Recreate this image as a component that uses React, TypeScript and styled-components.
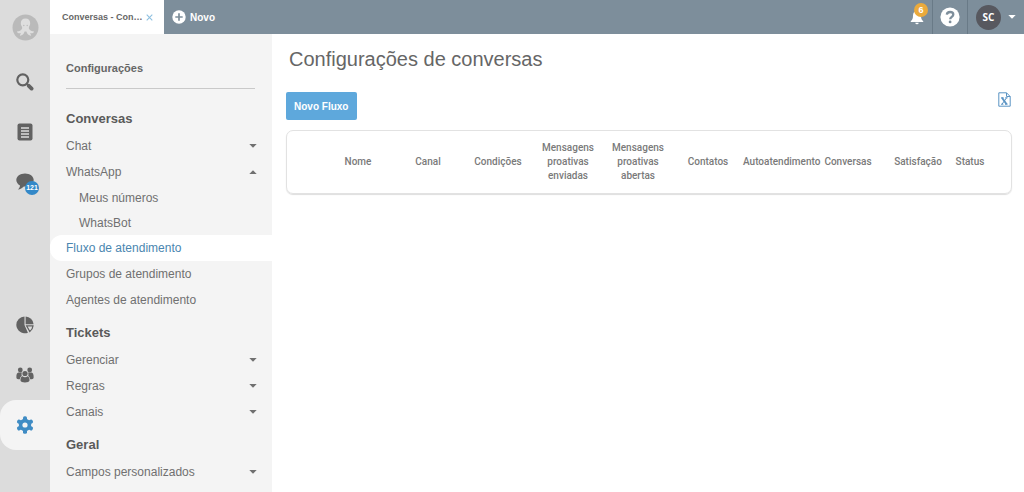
import React from "react";
import styled, { createGlobalStyle } from "styled-components";

const GlobalStyle = createGlobalStyle`
  *, *::before, *::after { box-sizing: border-box; }
  body {
    margin: 0;
    background: #fff;
    color: #666;
    font-family: "Liberation Sans", Arial, sans-serif;
    font-size: 12px;
  }
  button { font: inherit; color: inherit; border: 0; background: none; padding: 0; cursor: pointer; }
  a { color: inherit; text-decoration: none; }
  svg { display: block; }
  h1, h2, h3, ul { margin: 0; padding: 0; }
  ul { list-style: none; }
`;

const Shell = styled.div`
  display: flex;
  height: 100vh;
  overflow: hidden;
`;

const Rail = styled.nav`
  flex: 0 0 50px;
  display: flex;
  flex-direction: column;
  background: #dcdcdc;
  color: #626262;
`;

const RailLogo = styled.a`
  display: flex;
  justify-content: center;
  padding-top: 14px;
  height: 57px;
`;

const RailLink = styled.a<{ $active?: boolean }>`
  display: flex;
  flex: 0 0 50px;
  align-items: center;
  justify-content: center;
  border-radius: 16px 0 0 16px;
  background: ${(p) => (p.$active ? "#f4f4f4" : "transparent")};
  color: ${(p) => (p.$active ? "#3f8cc4" : "inherit")};
`;

const RailGap = styled.div`
  flex: 0 0 93px;
`;

const BadgeHolder = styled.span`
  position: relative;
  display: block;
`;

const Badge = styled.span<{ $tone: "blue" | "amber" }>`
  position: absolute;
  top: ${(p) => (p.$tone === "blue" ? "8px" : "-7px")};
  right: ${(p) => (p.$tone === "blue" ? "-5px" : "-4px")};
  width: 14px;
  height: 14px;
  line-height: 14px;
  border-radius: 50%;
  background: ${(p) => (p.$tone === "blue" ? "#3388c8" : "#eaaa3c")};
  color: #fff;
  font-size: ${(p) => (p.$tone === "blue" ? "7px" : "9px")};
  font-weight: 700;
  text-align: center;
`;

const Workspace = styled.div`
  flex: 1;
  min-width: 0;
  display: flex;
  flex-direction: column;
`;

const TopBar = styled.header`
  flex: 0 0 34px;
  display: flex;
  background: #7d8e9b;
  color: #fff;
`;

const Tab = styled.div`
  display: flex;
  align-items: center;
  gap: 3px;
  width: 114px;
  padding-left: 12px;
  background: #fff;
  color: #666;
  font-size: 9px;
  font-weight: 700;
`;

const CloseButton = styled.button`
  color: #8fc0e0;
`;

const NewTabButton = styled.button`
  display: flex;
  align-items: center;
  gap: 4px;
  padding: 0 8px;
  font-size: 10px;
  font-weight: 700;
`;

const TopActions = styled.div`
  display: flex;
  margin-left: auto;
`;

const TopAction = styled.button<{ $end?: boolean }>`
  display: flex;
  align-items: center;
  justify-content: ${(p) => (p.$end ? "flex-end" : "center")};
  width: 35px;
  padding-right: ${(p) => (p.$end ? "8px" : "0")};
  border-right: 1px solid #697a87;
`;

const UserButton = styled.button`
  display: flex;
  align-items: center;
  gap: 7px;
  padding: 0 8px;
`;

const Avatar = styled.span`
  flex: 0 0 25px;
  height: 25px;
  border-radius: 50%;
  background: #57585f;
  font: 700 10px/25px "Open Sans", sans-serif;
  text-align: center;
`;

const Body = styled.div`
  flex: 1;
  min-height: 0;
  display: flex;
`;

const Sidebar = styled.aside`
  flex: 0 0 222px;
  overflow: hidden;
  background: #f4f4f4;
`;

const SidebarTitle = styled.h2`
  height: 55px;
  margin: 0 17px 10px 16px;
  padding-top: 26px;
  border-bottom: 1px solid #c9c9c9;
  font-size: 11px;
  line-height: 16px;
`;

const Section = styled.section`
  padding-top: 10px;
`;

const SectionTitle = styled.h3`
  height: 24px;
  padding-left: 16px;
  font-size: 13px;
  line-height: 20px;
  color: #5a5a5a;
`;

const MenuLink = styled.a<{ $active?: boolean; $sub?: boolean }>`
  display: flex;
  align-items: center;
  justify-content: space-between;
  height: ${(p) => (p.$sub ? "25px" : "26px")};
  padding: 0 15px 0 ${(p) => (p.$sub ? "29px" : "16px")};
  border-radius: 12px 0 0 12px;
  background: ${(p) => (p.$active ? "#fff" : "transparent")};
  color: ${(p) => (p.$active ? "#4a86b0" : "#707070")};
`;

const Main = styled.main`
  flex: 1;
  min-width: 0;
  padding: 12px 12px 0 14px;
`;

const PageTitle = styled.h1`
  padding-left: 3px;
  font-size: 20px;
  font-weight: 400;
  line-height: 26px;
`;

const Toolbar = styled.div`
  display: flex;
  align-items: flex-start;
  justify-content: space-between;
  padding-top: 20px;
  height: 58px;
`;

const PrimaryButton = styled.button`
  height: 28px;
  padding: 0 9px 0 8px;
  border-radius: 2px;
  background: #5ea8dc;
  color: #fff;
  font-size: 10px;
  font-weight: 700;
`;

const ExportButton = styled.button`
  padding-right: 1px;
  color: #5b94c4;
`;

const Card = styled.div`
  border: 1px solid #e2e2e2;
  border-radius: 7px;
  box-shadow: 0 1px 1px #dedede;
`;

const Table = styled.table`
  width: 100%;
  height: 62px;
  table-layout: fixed;
  border-collapse: collapse;
`;

const HeadCell = styled.th`
  padding: 0;
  color: #7a7a7a;
  font: 500 10px/14px Roboto, sans-serif;
  text-align: center;
`;

const Logo = () => (
  <svg width="27" height="27" viewBox="0 0 27 27">
    <circle cx="13.500" cy="13.500" r="13" fill="#bababa" />
    <path
      fill="#dedede"
      d="M13.500 4.500c-2.900 0-4.700 2-4.700 4.700 0 1.700.9 2.800 1.300 4 .4 1.200-.4 2.500-1.700 3.300-1.200.8-2.700.5-3.400 1.300.6 1.500 2.500 1.800 4 1.200-.3 1-1 1.700-1.200 2.600 1.900.3 3.400-.8 4.200-2.500l.6-1.600h1.800l.6 1.600c.8 1.700 2.300 2.800 4.200 2.500-.2-.9-.9-1.600-1.200-2.600 1.500.6 3.400.3 4-1.200-.7-.8-2.200-.5-3.400-1.300-1.300-.8-2.100-2.100-1.700-3.300.4-1.200 1.300-2.300 1.300-4 0-2.700-1.800-4.700-4.700-4.700z"
    />
    <circle cx="11.800" cy="11.500" r=".7" fill="#bababa" />
    <circle cx="15.200" cy="11.500" r=".7" fill="#bababa" />
  </svg>
);

const SearchIcon = () => (
  <svg width="18" height="18" viewBox="0 0 18 18" fill="none" stroke="currentColor">
    <circle cx="6.800" cy="6.800" r="5.500" strokeWidth="2.200" />
    <path d="M11 11l1.500 1.500" strokeWidth="2" />
    <path d="M12.800 12.800l2.800 2.800" strokeWidth="3.800" strokeLinecap="round" />
  </svg>
);

const ListIcon = () => (
  <svg width="16" height="18" viewBox="0 0 16 18">
    <rect x=".5" y=".5" width="15" height="17" rx="2" fill="currentColor" />
    <path d="M4 5h8M4 8h8M4 11h8M4 14h8" stroke="#dcdcdc" strokeWidth="1.300" />
  </svg>
);

const ChatIcon = () => (
  <svg width="18" height="18" viewBox="0 0 18 18" fill="currentColor">
    <path d="M9 .5C4.300.5.3 3.300.3 7c0 2.200 1.400 4.300 3.700 5.400-.1 1.600-.9 3-2.100 4.100 2.400-.3 4.500-1.400 5.900-3 .4.100.8.100 1.200.1 4.700 0 8.700-2.900 8.700-6.600S13.700.5 9 .5z" />
  </svg>
);

const PieIcon = () => (
  <svg width="18" height="18" viewBox="0 0 18 18" fill="currentColor">
    <path d="M8.500.5v8.600l3.400 7.700A8.700 8.700 0 0 1 .3 8.900 8.600 8.600 0 0 1 8.500.5z" />
    <path d="M9.600.5a8.500 8.500 0 0 1 8 7.700h-8z" />
    <path fill="none" stroke="currentColor" strokeWidth="1.200" d="M10.600 9.900h6.400c-.2 2.200-1.200 4.200-3.200 5.700z" />
  </svg>
);

const PeopleIcon = () => (
  <svg width="18" height="16" viewBox="0 0 18 16" fill="currentColor">
    <circle cx="4.300" cy="3" r="2.400" />
    <circle cx="13.700" cy="3" r="2.400" />
    <path d="M2.400 5.400C1 5.900.4 7.300.4 9v1.700c0 1 1.500 1.500 3.400 1.500.2-1.600.9-2.800 2-3.300C5.400 7.700 5.500 6.400 6 5.400H2.400zM15.600 5.400c1.400.5 2 1.900 2 3.600v1.700c0 1-1.500 1.500-3.400 1.500-.2-1.600-.9-2.800-2-3.300.4-1.200.3-2.500-.2-3.500h3.600z" />
    <circle cx="9" cy="6.500" r="2.600" />
    <path d="M6.500 9.200c-1.400.4-2 1.700-2 3.300v1.100c0 1.300 2.200 1.900 4.500 1.900s4.500-.6 4.500-1.900v-1.100c0-1.600-.6-2.900-2-3.300-.7.700-1.500 1-2.500 1s-1.800-.3-2.500-1z" />
  </svg>
);

const GearIcon = () => (
  <svg width="18" height="18" viewBox="0 0 18 18">
    <g fill="currentColor">
      <circle cx="9" cy="9" r="6.200" />
      {[0, 60, 120].map((a) => (
        <rect key={a} x="7" y=".2" width="4" height="17.600" rx="1.600" transform={`rotate(${a} 9 9)`} />
      ))}
    </g>
    <circle cx="9" cy="9" r="2.600" fill="#f4f4f4" />
  </svg>
);

const CloseIcon = () => (
  <svg width="7" height="7" viewBox="0 0 7 7" stroke="currentColor" strokeWidth="1.100">
    <path d="M.7.7l5.600 5.600M6.300.7L.7 6.300" />
  </svg>
);

const PlusIcon = () => (
  <svg width="14" height="14" viewBox="0 0 14 14">
    <circle cx="7" cy="7" r="6.700" fill="#fff" />
    <path d="M7 3.300v7.400M3.300 7h7.400" stroke="#7d8e9b" strokeWidth="1.700" />
  </svg>
);

const BellIcon = () => (
  <svg width="14" height="15" viewBox="0 0 14 15" fill="#fff">
    <path d="M7 .8c-2.700.3-4 2.200-4 4.600 0 3-.7 4.400-2.200 5.700v1h12.400v-1C11.700 9.800 11 8.400 11 5.400 11 3 9.700 1.100 7 .8zM5.300 12.800a1.700 1.500 0 0 0 3.400 0z" />
  </svg>
);

const HelpIcon = () => (
  <svg width="20" height="20" viewBox="0 0 20 20">
    <circle cx="10" cy="10" r="9.600" fill="#fff" />
    <path d="M6.800 7.700C7 5.900 8.300 5 10.100 5c1.900 0 3.200 1 3.200 2.600 0 2.300-3.100 2.300-3.100 4.700" fill="none" stroke="#7d8e9b" strokeWidth="2.300" />
    <circle cx="10.100" cy="14.900" r="1.400" fill="#7d8e9b" />
  </svg>
);

const Caret = ({ up }: { up?: boolean }) => (
  <svg width="8" height="4" viewBox="0 0 8 4" fill="currentColor">
    <path d={up ? "M.3 4L4 .2 7.700 4z" : "M.3 0L4 3.800 7.700 0z"} />
  </svg>
);

const SheetIcon = () => (
  <svg width="13" height="15" viewBox="0 0 13 15" fill="none" stroke="currentColor">
    <path d="M.8.800h7.700l3.700 3.700v9.700H.8zM8.500.8v3.700h3.700" strokeWidth="1" />
    <path d="M4 5.800l4.600 6.400" strokeWidth="1.900" />
    <path d="M8.600 5.800L4 12.200M3 5.800h2.600M7.200 5.800h2.400M3 12.200h2.400M7 12.200h2.600" strokeWidth="1" />
  </svg>
);

type Item = { label: string; caret?: "up" | "down"; sub?: boolean; active?: boolean };

const sections: { title: string; items: Item[] }[] = [
  {
    title: "Conversas",
    items: [
      { label: "Chat", caret: "down" },
      { label: "WhatsApp", caret: "up" },
      { label: "Meus números", sub: true },
      { label: "WhatsBot", sub: true },
      { label: "Fluxo de atendimento", active: true },
      { label: "Grupos de atendimento" },
      { label: "Agentes de atendimento" },
    ],
  },
  {
    title: "Tickets",
    items: [
      { label: "Gerenciar", caret: "down" },
      { label: "Regras", caret: "down" },
      { label: "Canais", caret: "down" },
    ],
  },
  { title: "Geral", items: [{ label: "Campos personalizados", caret: "down" }] },
];

const columns: { label: string; width: number }[] = [
  { label: "", width: 36 },
  { label: "Nome", width: 70 },
  { label: "Canal", width: 70 },
  { label: "Condições", width: 70 },
  { label: "Mensagens proativas enviadas", width: 70 },
  { label: "Mensagens proativas abertas", width: 70 },
  { label: "Contatos", width: 70 },
  { label: "Autoatendimento", width: 70 },
  { label: "Conversas", width: 70 },
  { label: "Satisfação", width: 70 },
  { label: "Status", width: 34 },
  { label: "", width: 24 },
];

export default function App() {
  return (
    <>
      <GlobalStyle />
      <Shell>
        <Rail>
          <RailLogo href="#" aria-label="Início"><Logo /></RailLogo>
          <RailLink href="#" aria-label="Buscar"><SearchIcon /></RailLink>
          <RailLink href="#" aria-label="Tickets"><ListIcon /></RailLink>
          <RailLink href="#" aria-label="Conversas">
            <BadgeHolder>
              <ChatIcon />
              <Badge $tone="blue">121</Badge>
            </BadgeHolder>
          </RailLink>
          <RailGap />
          <RailLink href="#" aria-label="Relatórios"><PieIcon /></RailLink>
          <RailLink href="#" aria-label="Pessoas"><PeopleIcon /></RailLink>
          <RailLink href="#" aria-label="Configurações" $active><GearIcon /></RailLink>
        </Rail>
        <Workspace>
          <TopBar>
            <Tab>
              Conversas - Con…
              <CloseButton aria-label="Fechar aba"><CloseIcon /></CloseButton>
            </Tab>
            <NewTabButton><PlusIcon />Novo</NewTabButton>
            <TopActions>
              <TopAction aria-label="Notificações" $end>
                <BadgeHolder>
                  <BellIcon />
                  <Badge $tone="amber">6</Badge>
                </BadgeHolder>
              </TopAction>
              <TopAction aria-label="Ajuda"><HelpIcon /></TopAction>
              <UserButton><Avatar>SC</Avatar><Caret /></UserButton>
            </TopActions>
          </TopBar>
          <Body>
            <Sidebar>
              <SidebarTitle>Configurações</SidebarTitle>
              {sections.map((s) => (
                <Section key={s.title}>
                  <SectionTitle>{s.title}</SectionTitle>
                  <ul>
                    {s.items.map((i) => (
                      <li key={i.label}>
                        <MenuLink href="#" $sub={i.sub} $active={i.active}>
                          {i.label}
                          {i.caret && <Caret up={i.caret === "up"} />}
                        </MenuLink>
                      </li>
                    ))}
                  </ul>
                </Section>
              ))}
            </Sidebar>
            <Main>
              <PageTitle>Configurações de conversas</PageTitle>
              <Toolbar>
                <PrimaryButton>Novo Fluxo</PrimaryButton>
                <ExportButton aria-label="Exportar planilha"><SheetIcon /></ExportButton>
              </Toolbar>
              <Card>
                <Table>
                  <colgroup>
                    {columns.map((c, i) => <col key={i} width={c.width} />)}
                  </colgroup>
                  <thead>
                    <tr>
                      {columns.map((c, i) => <HeadCell key={i} scope="col">{c.label}</HeadCell>)}
                    </tr>
                  </thead>
                </Table>
              </Card>
            </Main>
          </Body>
        </Workspace>
      </Shell>
    </>
  );
}
